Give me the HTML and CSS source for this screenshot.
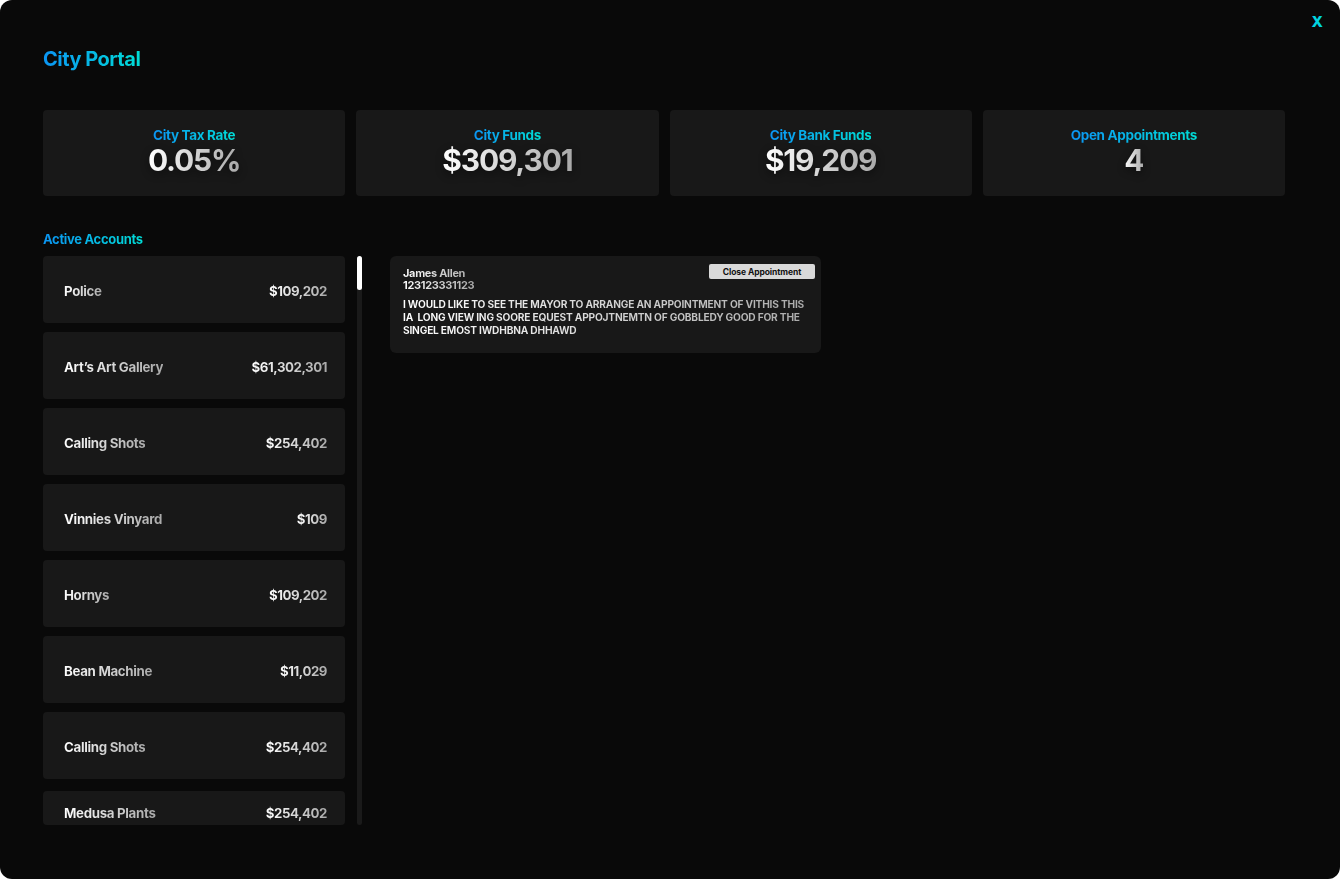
FILE: index.html
```html
<!DOCTYPE html>
<html lang="en">
<head>
<meta charset="utf-8">
<title>City Portal</title>
<link rel="stylesheet" href="styles.css">
</head>
<body>
<div class="app">
  <button class="close-x">X</button>
  <h1 class="title grad-blue">City Portal</h1>

  <div class="stats">
    <div class="stat">
      <div class="stat-label grad-blue">City Tax Rate</div>
      <div class="stat-value grad-white">0.05%</div>
    </div>
    <div class="stat">
      <div class="stat-label grad-blue">City Funds</div>
      <div class="stat-value grad-white">$309,301</div>
    </div>
    <div class="stat">
      <div class="stat-label grad-blue">City Bank Funds</div>
      <div class="stat-value grad-white">$19,209</div>
    </div>
    <div class="stat">
      <div class="stat-label grad-blue">Open Appointments</div>
      <div class="stat-value grad-white">4</div>
    </div>
  </div>

  <h2 class="section-title grad-blue">Active Accounts</h2>

  <div class="main">
    <div class="accounts-wrap">
      <div class="accounts">
        <div class="account"><span class="grad-white">Police</span><span class="grad-white">$109,202</span></div>
        <div class="account"><span class="grad-white">Art’s Art Gallery</span><span class="grad-white">$61,302,301</span></div>
        <div class="account"><span class="grad-white">Calling Shots</span><span class="grad-white">$254,402</span></div>
        <div class="account"><span class="grad-white">Vinnies Vinyard</span><span class="grad-white">$109</span></div>
        <div class="account"><span class="grad-white">Hornys</span><span class="grad-white">$109,202</span></div>
        <div class="account"><span class="grad-white">Bean Machine</span><span class="grad-white">$11,029</span></div>
        <div class="account"><span class="grad-white">Calling Shots</span><span class="grad-white">$254,402</span></div>
        <div class="account account-last"><span class="grad-white">Medusa Plants</span><span class="grad-white">$254,402</span></div>
      </div>
      <div class="scrollbar"><div class="thumb"></div></div>
    </div>

    <div class="appointments">
      <div class="appt">
        <div class="appt-head">
          <div class="appt-who">
            <div class="grad-white">James Allen</div>
            <div class="grad-white">123123331123</div>
          </div>
          <button class="appt-btn">Close Appointment</button>
        </div>
        <p class="appt-msg grad-white">I WOULD LIKE TO SEE THE MAYOR TO ARRANGE AN APPOINTMENT OF VITHIS THIS<br>IA &nbsp;LONG VIEW ING SOORE EQUEST APPOJTNEMTN OF GOBBLEDY GOOD FOR THE<br>SINGEL EMOST IWDHBNA DHHAWD</p>
      </div>
    </div>
  </div>
</div>
</body>
</html>
```

FILE: styles.css
```css
* { box-sizing: border-box; }

html, body {
  margin: 0;
  padding: 0;
  background: #ffffff;
}

body {
  font-family: Inter, "Noto Sans", sans-serif;
  font-weight: 700;
  letter-spacing: -0.02em;
}

.app {
  position: relative;
  width: 1340px;
  height: 879px;
  background: #090909;
  border-radius: 12px;
  padding: 46px 55px 0 43px;
  overflow: hidden;
}

.grad-blue {
  background: linear-gradient(90deg, #0b95f4 0%, #00dcd6 100%);
  -webkit-background-clip: text;
  background-clip: text;
  color: transparent;
}

.grad-white {
  background: linear-gradient(90deg, #ffffff 0%, #a9a9a9 100%);
  -webkit-background-clip: text;
  background-clip: text;
  color: transparent;
}

.close-x {
  position: absolute;
  top: 12px;
  right: 17px;
  background: none;
  border: 0;
  padding: 0;
  font-family: inherit;
  font-weight: 800;
  font-size: 15px;
  color: #00d4e0;
  cursor: pointer;
}

.title {
  margin: 0;
  font-size: 20px;
  line-height: 26px;
  display: inline-block;
  letter-spacing: -0.025em;
}

.stats {
  display: grid;
  grid-template-columns: repeat(4, 1fr);
  gap: 11px;
  margin-top: 38px;
}

.stat {
  height: 86px;
  background: #181818;
  border-radius: 4px;
  display: flex;
  flex-direction: column;
  align-items: center;
  justify-content: flex-start;
  padding-top: 16px;
}

.stat-label {
  font-size: 13.5px;
  line-height: 18px;
  letter-spacing: -0.025em;
}

.stat-value {
  font-size: 30px;
  line-height: 32px;
  letter-spacing: -0.04em;
  filter: drop-shadow(0 3px 4px rgba(0,0,0,0.45));
}

.section-title {
  margin: 35px 0 0;
  font-size: 13px;
  line-height: 16px;
  display: inline-block;
}

.main {
  display: flex;
  gap: 28px;
  margin-top: 8px;
}

.accounts-wrap {
  display: flex;
  gap: 12px;
  height: 569px;
}

.accounts {
  width: 302px;
  display: flex;
  flex-direction: column;
  gap: 9px;
  overflow: hidden;
}

.account {
  flex: 0 0 67px;
  background: #181818;
  border-radius: 4px;
  display: flex;
  align-items: center;
  justify-content: space-between;
  padding: 2px 18px 0 21px;
  font-size: 13.3px;
  line-height: 16px;
}

.account span:last-child {
  letter-spacing: -0.035em;
}

.account-last {
  flex: 0 0 34px;
  margin-top: 3px;
  align-items: flex-start;
  padding-top: 14px;
}

.scrollbar {
  width: 5px;
  height: 100%;
  background: #1a1a1a;
  border-radius: 3px;
}

.thumb {
  width: 5px;
  height: 34px;
  background: #ffffff;
  border-radius: 3px;
}

.appointments {
  width: 431px;
  display: flex;
  flex-direction: column;
  gap: 9px;
}

.appt {
  background: #181818;
  border-radius: 6px;
  padding: 8px 6px 16px 13px;
  min-height: 97px;
}

.appt-head {
  display: flex;
  justify-content: space-between;
  align-items: flex-start;
}

.appt-who {
  padding-top: 3px;
  font-size: 11px;
  line-height: 12px;
  letter-spacing: -0.03em;
}

.appt-btn {
  width: 106px;
  height: 15px;
  background: #d9d9d9;
  border: 0;
  border-radius: 2px;
  padding: 0;
  font-family: inherit;
  font-weight: 700;
  font-size: 8.5px;
  letter-spacing: -0.01em;
  color: #111;
  cursor: pointer;
}

.appt-msg {
  margin: 7px 0 0;
  font-size: 10.2px;
  line-height: 13px;
  letter-spacing: -0.02em;
  white-space: nowrap;
}
```
